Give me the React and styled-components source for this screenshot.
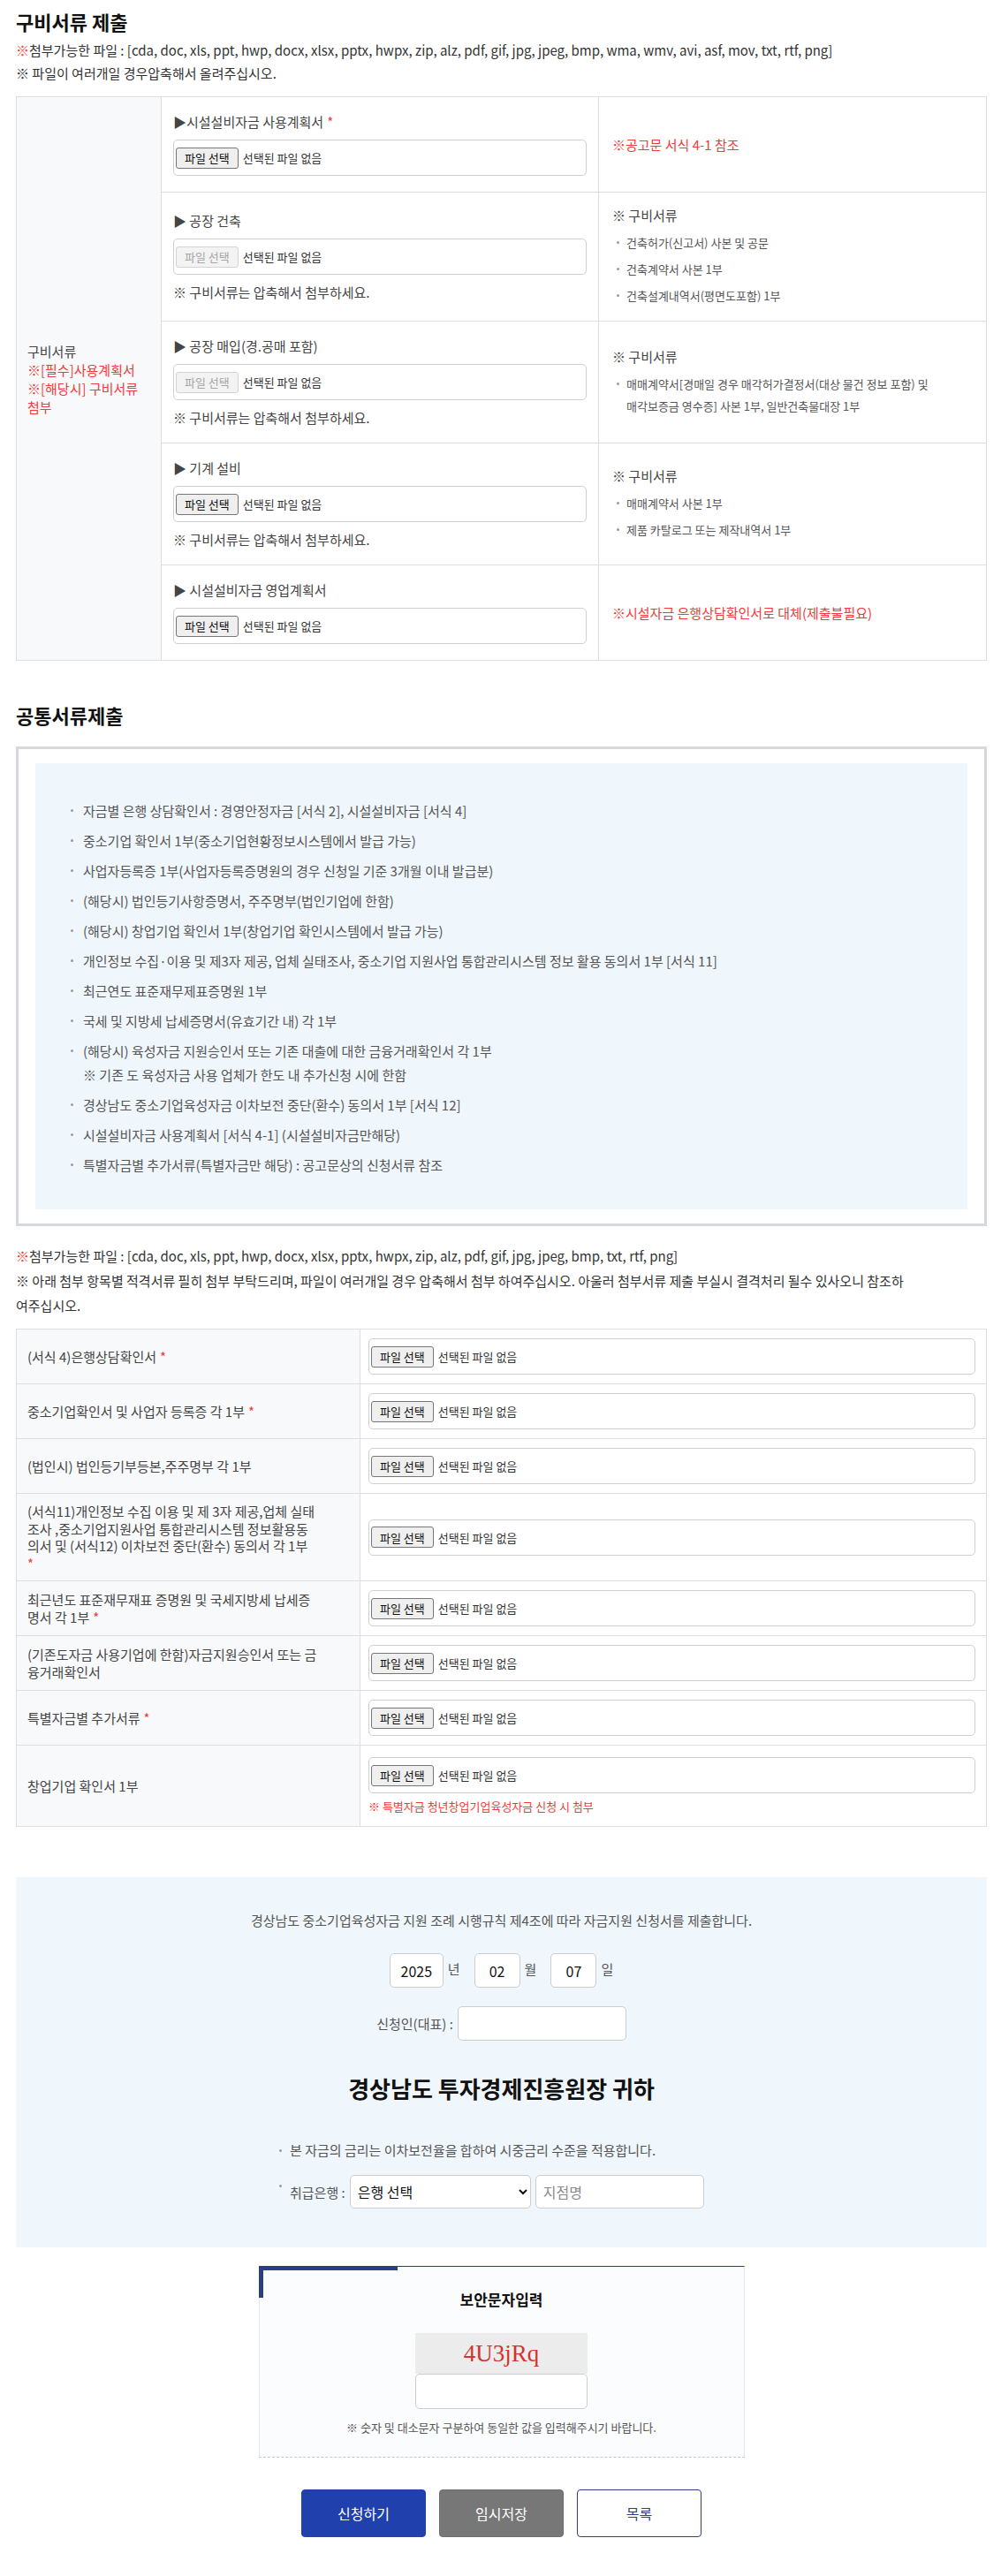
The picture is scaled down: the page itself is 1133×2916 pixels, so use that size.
import React from 'react';
import styled, { createGlobalStyle } from 'styled-components';

const RED = '#f03b3b';
const NAVY = '#2b3f7e';

const GlobalStyle = createGlobalStyle`
  * { box-sizing: border-box; }
  body {
    margin: 0;
    background: #fff;
    color: #333;
    font-family: 'Noto Sans CJK KR', 'Noto Sans', sans-serif;
  }
`;

const Page = styled.div`
  width: 1133px;
  padding: 8px 16px 40px 18px;
`;

const SectionTitle = styled.h2`
  margin: ${(p) => p.$mt || 0}px 0 0;
  font-size: 22px;
  font-weight: 700;
  line-height: 32px;
  color: #111;
`;

const Notes = styled.div`
  margin-top: ${(p) => p.$mt || 0}px;
  font-size: 15px;
  line-height: ${(p) => p.$lh || 26}px;
  color: #333;
`;

const Red = styled.span`
  color: ${RED};
`;

const Req = styled.span`
  color: ${RED};
  margin-left: 4px;
`;

const DocTable = styled.table`
  width: 100%;
  border-collapse: collapse;
  table-layout: fixed;
  margin-top: ${(p) => p.$mt || 0}px;
  font-size: 15px;
`;

const Col = styled.col`
  width: ${(p) => (p.$w ? `${p.$w}px` : 'auto')};
`;

const LabelCell = styled.th`
  border: 1px solid #dedede;
  background: #f8f9fb;
  font-weight: 400;
  text-align: left;
  vertical-align: middle;
  padding: ${(p) => p.$pad || '0 12px'};
  line-height: ${(p) => p.$lh || 21}px;
  color: #444;
`;

const FieldCell = styled.td`
  border: 1px solid #dedede;
  vertical-align: middle;
  padding: ${(p) => p.$pad || '18px 13px'};
`;

const InfoCell = styled.td`
  border: 1px solid #dedede;
  vertical-align: middle;
  padding: 16px 15px;
`;

const FieldTitle = styled.div`
  line-height: 20px;
  margin-bottom: 10px;
  color: #444;
`;

const FieldNote = styled.div`
  margin-top: 10px;
  line-height: 20px;
  color: #444;
`;

const FileBox = styled.div`
  display: flex;
  align-items: center;
  height: 41px;
  padding: 0 2px;
  border: 1px solid #cfcfcf;
  border-radius: 5px;
  background: #fff;
`;

const FileButton = styled.button`
  height: 24px;
  padding: 0 9px;
  font-family: inherit;
  font-size: 13px;
  border-radius: 3px;
  border: 1px solid ${(p) => (p.disabled ? '#d3d3d3' : '#767676')};
  background: ${(p) => (p.disabled ? '#f3f3f3' : '#efefef')};
  color: ${(p) => (p.disabled ? '#a6a6a6' : '#111')};
`;

const FileName = styled.span`
  margin-left: 5px;
  font-size: 13px;
  color: #333;
`;

const InfoHead = styled.div`
  line-height: 20px;
  color: #444;
`;

const InfoList = styled.ul`
  margin: 8px 0 0;
  padding: 0;
  list-style: none;
`;

const InfoItem = styled.li`
  display: flex;
  font-size: 13px;
  line-height: 25px;
  color: #555;
  word-break: keep-all;
  & + & { margin-top: 5px; }
`;

const Dot = styled.span`
  flex: none;
  width: 3px;
  height: 3px;
  border-radius: 50%;
  background: #999;
  margin: ${(p) => p.$m || '11px 8px 0 5px'};
`;

const RedInfo = styled.div`
  color: ${RED};
  line-height: 22px;
`;

const CommonOuter = styled.div`
  margin-top: 20px;
  border: 3px solid #d5d8dc;
  padding: 16px 19px;
`;

const CommonInner = styled.ul`
  margin: 0;
  list-style: none;
  background: #eff6fc;
  padding: 40px 20px 37px 40px;
`;

const CommonItem = styled.li`
  display: flex;
  font-size: 15px;
  line-height: 27px;
  color: #555;
  & + & { margin-top: 7px; }
`;

const ReqNote = styled.div`
  margin-top: 6px;
  font-size: 13px;
  line-height: 18px;
  color: ${RED};
`;

const FormBox = styled.div`
  margin-top: 57px;
  background: #eff6fc;
  padding: 38px 0 44px;
  display: flex;
  flex-direction: column;
  align-items: center;
`;

const Intro = styled.div`
  font-size: 15px;
  line-height: 22px;
  color: #555;
`;

const InlineRow = styled.div`
  display: flex;
  align-items: center;
  margin-top: ${(p) => p.$mt || 0}px;
`;

const TextInput = styled.input`
  width: ${(p) => p.$w}px;
  height: ${(p) => p.$h || 39}px;
  margin-left: ${(p) => p.$ml || 0}px;
  border: 1px solid #cdcdcd;
  border-radius: 5px;
  background: #fff;
  font-family: inherit;
  font-size: 16px;
  color: #111;
  text-align: ${(p) => (p.$center ? 'center' : 'left')};
  padding: 0 8px;
  &::placeholder { color: #8a8a8a; }
`;

const Unit = styled.span`
  font-size: 15px;
  color: #555;
  margin: -4px ${(p) => (p.$last ? 0 : 16)}px 0 5px;
`;

const FormLabel = styled.span`
  font-size: 15px;
  color: #555;
`;

const Addressee = styled.h3`
  margin: 37px 0 0;
  font-size: 26px;
  font-weight: 700;
  line-height: 34px;
  color: #111;
`;

const Terms = styled.div`
  width: 505px;
  margin-top: 42px;
`;

const TermLine = styled.div`
  display: flex;
  align-items: center;
  font-size: 15px;
  line-height: 22px;
  color: #555;
`;

const BankSelect = styled.select`
  width: 205px;
  height: 38px;
  margin-left: 5px;
  padding: 0 4px;
  border: 1px solid #cdcdcd;
  border-radius: 5px;
  background: #fff;
  font-family: inherit;
  font-size: 16px;
  color: #111;
`;

const Captcha = styled.div`
  position: relative;
  width: 550px;
  margin: 21px auto 0;
  padding: 25px 0 23px;
  background: #fbfcfd;
  border: 1px solid #e3e6ea;
  border-top: 1px solid ${NAVY};
  border-bottom: 1px dashed #c8c8c8;
  display: flex;
  flex-direction: column;
  align-items: center;
  &::before {
    content: '';
    position: absolute;
    top: -1px;
    left: -1px;
    width: 157px;
    height: 5px;
    background: ${NAVY};
  }
  &::after {
    content: '';
    position: absolute;
    top: -1px;
    left: -1px;
    width: 5px;
    height: 36px;
    background: ${NAVY};
  }
`;

const CaptchaTitle = styled.div`
  font-size: 17px;
  font-weight: 700;
  line-height: 24px;
  color: #111;
`;

const CaptchaImage = styled.div`
  margin-top: 26px;
  width: 195px;
  height: 46px;
  background: #ececec;
  display: flex;
  align-items: center;
  justify-content: center;
  font-family: 'Liberation Serif', 'DejaVu Serif', serif;
  font-size: 27px;
  color: #d3322f;
`;

const CaptchaNote = styled.div`
  margin-top: 11px;
  font-size: 13px;
  line-height: 20px;
  color: #555;
`;

const Actions = styled.div`
  display: flex;
  justify-content: center;
  gap: 15px;
  margin-top: 36px;
`;

const variants = {
  primary: { bg: '#2041ad', border: '#2041ad', color: '#fff' },
  gray: { bg: '#777', border: '#6f6f6f', color: '#fff' },
  outline: { bg: '#fff', border: '#2b3f8c', color: '#2b3f8c' },
};

const ActionButton = styled.button`
  width: 141px;
  height: 54px;
  border-radius: 4px;
  font-family: inherit;
  font-size: 16px;
  background: ${(p) => variants[p.$variant].bg};
  border: 1px solid ${(p) => variants[p.$variant].border};
  color: ${(p) => variants[p.$variant].color};
`;

const equipRows = [
  {
    title: '▶시설설비자금 사용계획서', required: true, disabled: false, note: false,
    red: '※공고문 서식 4-1 참조',
  },
  {
    title: '▶ 공장 건축', disabled: true, note: true,
    list: ['건축허가(신고서) 사본 및 공문', '건축계약서 사본 1부', '건축설계내역서(평면도포함) 1부'],
  },
  {
    title: '▶ 공장 매입(경.공매 포함)', disabled: true, note: true,
    list: ['매매계약서[경매일 경우 매각허가결정서(대상 물건 정보 포함) 및 매각보증금 영수증] 사본 1부, 일반건축물대장 1부'],
  },
  {
    title: '▶ 기계 설비', disabled: false, note: true,
    list: ['매매계약서 사본 1부', '제품 카탈로그 또는 제작내역서 1부'],
  },
  {
    title: '▶ 시설설비자금 영업계획서', disabled: false, note: false,
    red: '※시설자금 은행상담확인서로 대체(제출불필요)',
  },
];

const commonDocs = [
  ['자금별 은행 상담확인서 : 경영안정자금 [서식 2], 시설설비자금 [서식 4]'],
  ['중소기업 확인서 1부(중소기업현황정보시스템에서 발급 가능)'],
  ['사업자등록증 1부(사업자등록증명원의 경우 신청일 기준 3개월 이내 발급분)'],
  ['(해당시) 법인등기사항증명서, 주주명부(법인기업에 한함)'],
  ['(해당시) 창업기업 확인서 1부(창업기업 확인시스템에서 발급 가능)'],
  ['개인정보 수집·이용 및 제3자 제공, 업체 실태조사, 중소기업 지원사업 통합관리시스템 정보 활용 동의서 1부 [서식 11]'],
  ['최근연도 표준재무제표증명원 1부'],
  ['국세 및 지방세 납세증명서(유효기간 내) 각 1부'],
  ['(해당시) 육성자금 지원승인서 또는 기존 대출에 대한 금융거래확인서 각 1부', '※ 기존 도 육성자금 사용 업체가 한도 내 추가신청 시에 한함'],
  ['경상남도 중소기업육성자금 이차보전 중단(환수) 동의서 1부 [서식 12]'],
  ['시설설비자금 사용계획서 [서식 4-1] (시설설비자금만해당)'],
  ['특별자금별 추가서류(특별자금만 해당) : 공고문상의 신청서류 참조'],
];

const attachRows = [
  { lines: ['(서식 4)은행상담확인서'], required: true },
  { lines: ['중소기업확인서 및 사업자 등록증 각 1부'], required: true },
  { lines: ['(법인시) 법인등기부등본,주주명부 각 1부'] },
  {
    lines: ['(서식11)개인정보 수집 이용 및 제 3자 제공,업체 실태', '조사 ,중소기업지원사업 통합관리시스템 정보활용동', '의서 및 (서식12) 이차보전 중단(환수) 동의서 각 1부', ''],
    required: true,
  },
  { lines: ['최근년도 표준재무재표 증명원 및 국세지방세 납세증', '명서 각 1부'], required: true },
  { lines: ['(기존도자금 사용기업에 한함)자금지원승인서 또는 금', '융거래확인서'] },
  { lines: ['특별자금별 추가서류'], required: true },
  { lines: ['창업기업 확인서 1부'], note: '※ 특별자금 청년창업기업육성자금 신청 시 첨부' },
];

const FileField = ({ disabled }) => (
  <FileBox>
    <FileButton type="button" disabled={disabled}>파일 선택</FileButton>
    <FileName>선택된 파일 없음</FileName>
  </FileBox>
);

const renderLabel = (lines, required) => lines.map((line, i) => (
  <React.Fragment key={`l${i}`}>
    {i > 0 && <br />}
    {line}
    {required && i === lines.length - 1 && (line ? <Req>*</Req> : <Red>*</Red>)}
  </React.Fragment>
));

export default function App() {
  return (
    <>
      <GlobalStyle />
      <Page>
        <SectionTitle>구비서류 제출</SectionTitle>
        <Notes $mt={4}>
          <Red>※</Red>첨부가능한 파일 : [cda, doc, xls, ppt, hwp, docx, xlsx, pptx, hwpx, zip, alz, pdf, gif, jpg, jpeg, bmp, wma, wmv, avi, asf, mov, txt, rtf, png]
          <br />
          ※ 파일이 여러개일 경우압축해서 올려주십시오.
        </Notes>

        <DocTable $mt={13}>
          <colgroup>
            <Col $w={164} />
            <Col $w={495} />
            <Col />
          </colgroup>
          <tbody>
            {equipRows.map((row, i) => (
              <tr key={row.title}>
                {i === 0 && (
                  <LabelCell rowSpan={equipRows.length}>
                    구비서류
                    <br />
                    <Red>※[필수]사용계획서</Red>
                    <br />
                    <Red>※[해당시] 구비서류 첨부</Red>
                  </LabelCell>
                )}
                <FieldCell>
                  <FieldTitle>
                    {row.title}
                    {row.required && <Req>*</Req>}
                  </FieldTitle>
                  <FileField disabled={row.disabled} />
                  {row.note && <FieldNote>※ 구비서류는 압축해서 첨부하세요.</FieldNote>}
                </FieldCell>
                <InfoCell>
                  {row.red ? (
                    <RedInfo>{row.red}</RedInfo>
                  ) : (
                    <>
                      <InfoHead>※ 구비서류</InfoHead>
                      <InfoList>
                        {row.list.map((item) => (
                          <InfoItem key={item}>
                            <Dot />
                            <span>{item}</span>
                          </InfoItem>
                        ))}
                      </InfoList>
                    </>
                  )}
                </InfoCell>
              </tr>
            ))}
          </tbody>
        </DocTable>

        <SectionTitle $mt={45}>공통서류제출</SectionTitle>
        <CommonOuter>
          <CommonInner>
            {commonDocs.map(([text, sub]) => (
              <CommonItem key={text}>
                <Dot $m="12px 11px 0 0" />
                <div>
                  {text}
                  {sub && <div>{sub}</div>}
                </div>
              </CommonItem>
            ))}
          </CommonInner>
        </CommonOuter>

        <Notes $mt={20} $lh={28}>
          <Red>※</Red>첨부가능한 파일 : [cda, doc, xls, ppt, hwp, docx, xlsx, pptx, hwpx, zip, alz, pdf, gif, jpg, jpeg, bmp, txt, rtf, png]
          <br />
          ※ 아래 첨부 항목별 적격서류 필히 첨부 부탁드리며, 파일이 여러개일 경우 압축해서 첨부 하여주십시오. 아울러 첨부서류 제출 부실시 결격처리 될수 있사오니 참조하
          <br />
          여주십시오.
        </Notes>

        <DocTable $mt={12}>
          <colgroup>
            <Col $w={389} />
            <Col />
          </colgroup>
          <tbody>
            {attachRows.map((row) => (
              <tr key={row.lines[0]}>
                <LabelCell $pad="10px 12px" $lh={19.5}>
                  {renderLabel(row.lines, row.required)}
                </LabelCell>
                <FieldCell $pad={row.note ? '13px 12px 13px 9px' : '10px 12px 10px 9px'}>
                  <FileField />
                  {row.note && <ReqNote>{row.note}</ReqNote>}
                </FieldCell>
              </tr>
            ))}
          </tbody>
        </DocTable>

        <FormBox>
          <Intro>경상남도 중소기업육성자금 지원 조례 시행규칙 제4조에 따라 자금지원 신청서를 제출합니다.</Intro>
          <InlineRow $mt={26}>
            <TextInput $w={61} $center defaultValue="2025" />
            <Unit>년</Unit>
            <TextInput $w={52} $center defaultValue="02" />
            <Unit>월</Unit>
            <TextInput $w={52} $center defaultValue="07" />
            <Unit $last>일</Unit>
          </InlineRow>
          <InlineRow $mt={21}>
            <FormLabel>신청인(대표) :</FormLabel>
            <TextInput $w={191} $ml={5} />
          </InlineRow>
          <Addressee>경상남도 투자경제진흥원장 귀하</Addressee>
          <Terms>
            <TermLine>
              <Dot $m="0 9px 0 1px" />
              본 자금의 금리는 이차보전율을 합하여 시중금리 수준을 적용합니다.
            </TermLine>
            <InlineRow $mt={17}>
              <Dot $m="-14px 9px 0 1px" />
              <FormLabel>취급은행 :</FormLabel>
              <BankSelect defaultValue="">
                <option value="">은행 선택</option>
              </BankSelect>
              <TextInput $w={191} $h={38} $ml={5} placeholder="지점명" />
            </InlineRow>
          </Terms>
        </FormBox>

        <Captcha>
          <CaptchaTitle>보안문자입력</CaptchaTitle>
          <CaptchaImage>4U3jRq</CaptchaImage>
          <TextInput $w={195} $h={40} $center />
          <CaptchaNote>※ 숫자 및 대소문자 구분하여 동일한 값을 입력해주시기 바랍니다.</CaptchaNote>
        </Captcha>

        <Actions>
          <ActionButton type="button" $variant="primary">신청하기</ActionButton>
          <ActionButton type="button" $variant="gray">임시저장</ActionButton>
          <ActionButton type="button" $variant="outline">목록</ActionButton>
        </Actions>
      </Page>
    </>
  );
}
